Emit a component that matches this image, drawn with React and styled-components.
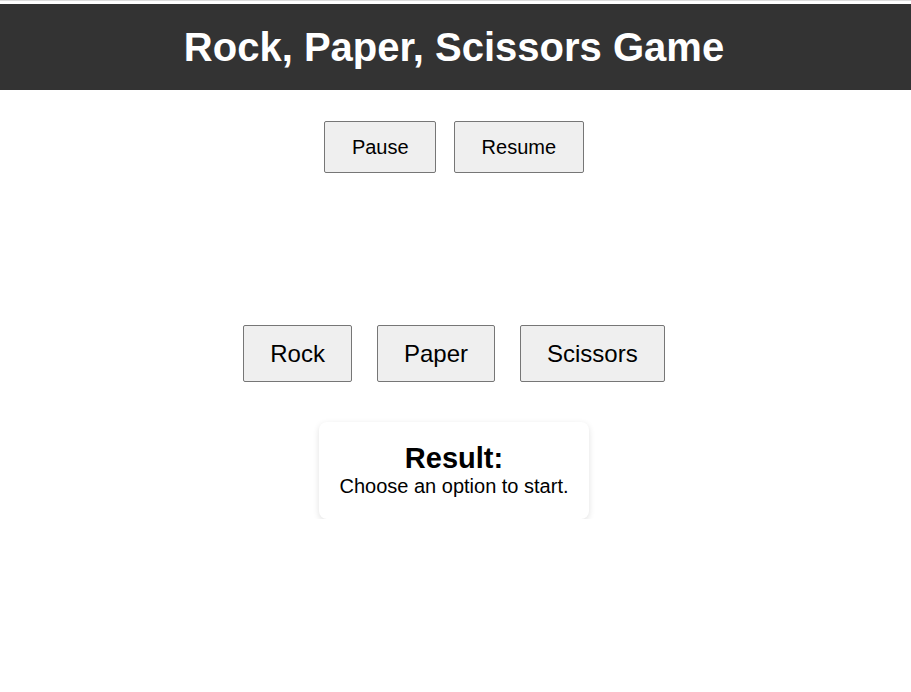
import React, { useState } from 'react';
import styled, { createGlobalStyle } from 'styled-components';

const GlobalStyle = createGlobalStyle`
  html, body {
    margin: 0;
    padding: 0;
    background: #fff;
  }
  body {
    font-family: "Liberation Sans", Arial, sans-serif;
    color: #000;
  }
`;

const Page = styled.div`
  border-top: 1px solid #dcdcdc;
  padding-top: 3px;
  display: flex;
  flex-direction: column;
  align-items: center;
`;

const Header = styled.header`
  align-self: stretch;
  background-color: #333333;
  color: #fff;
  padding: 20px 3px 20px 0;
  text-align: center;
`;

const Title = styled.h1`
  margin: 0;
  font-size: 40px;
  font-weight: bold;
  line-height: 46px;
`;

const Main = styled.main`
  align-self: stretch;
  padding-right: 3px;
  display: flex;
  flex-direction: column;
  align-items: center;
`;

const Controls = styled.div`
  display: flex;
  justify-content: center;
  gap: ${props => props.gap}px;
  margin-top: ${props => props.top}px;
`;

const Button = styled.button`
  font-family: "Liberation Sans", Arial, sans-serif;
  font-size: ${props => props.size}px;
  line-height: normal;
  padding: 13.5px ${props => props.padX}px;
  background: #efefef;
  color: #000;
  border: 1px solid #767676;
  border-radius: 2px;
  cursor: pointer;
`;

const ResultCard = styled.div`
  margin-top: 40px;
  width: 230px;
  padding: 20px 20px 21px;
  background: #fff;
  border-radius: 8px;
  box-shadow: 0 2px 6px rgba(0, 0, 0, 0.12);
  text-align: center;
`;

const ResultTitle = styled.h2`
  margin: 0;
  font-size: 29px;
  font-weight: bold;
`;

const ResultText = styled.p`
  margin: 0;
  font-size: 20px;
`;

export default function App() {
  const [result, setResult] = useState('Choose an option to start.');
  const [paused, setPaused] = useState(false);

  const play = choice => {
    if (paused) return;
    const options = ['Rock', 'Paper', 'Scissors'];
    const cpu = options[Math.floor(Math.random() * 3)];
    if (cpu === choice) setResult(`Both chose ${choice}. It's a tie!`);
    else if (
      (choice === 'Rock' && cpu === 'Scissors') ||
      (choice === 'Paper' && cpu === 'Rock') ||
      (choice === 'Scissors' && cpu === 'Paper')
    ) setResult(`${choice} beats ${cpu}. You win!`);
    else setResult(`${cpu} beats ${choice}. You lose!`);
  };

  return (
    <>
      <GlobalStyle />
      <Page>
        <Header>
          <Title>Rock, Paper, Scissors Game</Title>
        </Header>
        <Main>
          <Controls gap={18} top={31}>
            <Button size={20} padX={26.5} onClick={() => setPaused(true)}>Pause</Button>
            <Button size={20} padX={26.5} onClick={() => setPaused(false)}>Resume</Button>
          </Controls>
          <Controls gap={25} top={152}>
            <Button size={24} padX={26} onClick={() => play('Rock')}>Rock</Button>
            <Button size={24} padX={26} onClick={() => play('Paper')}>Paper</Button>
            <Button size={24} padX={26} onClick={() => play('Scissors')}>Scissors</Button>
          </Controls>
          <ResultCard>
            <ResultTitle>Result:</ResultTitle>
            <ResultText>{result}</ResultText>
          </ResultCard>
        </Main>
      </Page>
    </>
  );
}
